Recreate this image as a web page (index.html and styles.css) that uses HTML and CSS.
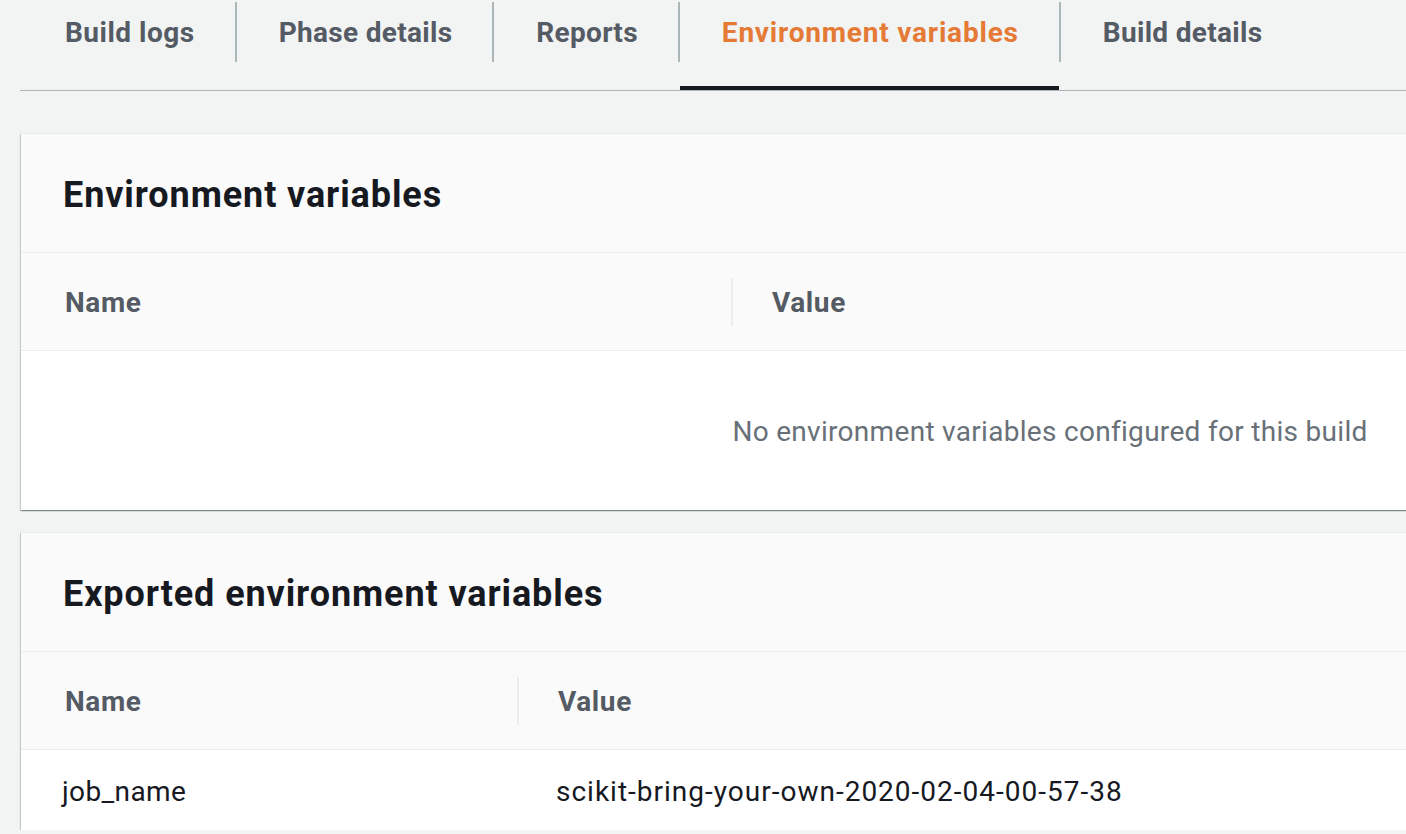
FILE: index.html
```html
<!DOCTYPE html>
<html lang="en">
<head>
<meta charset="utf-8">
<title>Environment variables</title>
<link rel="stylesheet" href="styles.css">
</head>
<body>
<div class="page">
  <nav class="tabs">
    <div class="tab tab-first"><span class="tab-label">Build logs</span></div>
    <div class="tab-sep"></div>
    <div class="tab"><span class="tab-label">Phase details</span></div>
    <div class="tab-sep"></div>
    <div class="tab"><span class="tab-label">Reports</span></div>
    <div class="tab-sep"></div>
    <div class="tab tab-active"><span class="tab-label">Environment variables</span></div>
    <div class="tab-sep"></div>
    <div class="tab"><span class="tab-label">Build details</span></div>
  </nav>

  <section class="card card-env">
    <header class="card-header"><h2 class="card-title">Environment variables</h2></header>
    <div class="thead">
      <div class="th th-name-wide">Name</div>
      <div class="th th-value"><span class="th-sep"></span><span>Value</span></div>
    </div>
    <div class="empty">No environment variables configured for this build</div>
  </section>

  <section class="card card-exported">
    <header class="card-header"><h2 class="card-title">Exported environment variables</h2></header>
    <div class="thead">
      <div class="th th-name-narrow">Name</div>
      <div class="th th-value"><span class="th-sep"></span><span>Value</span></div>
    </div>
    <div class="row">
      <div class="td td-name-narrow">job_name</div>
      <div class="td td-value">scikit-bring-your-own-2020-02-04-00-57-38</div>
    </div>
  </section>
</div>
</body>
</html>
```

FILE: styles.css
```css
html, body {
  margin: 0;
  padding: 0;
}
body {
  background: #f2f3f3;
  overflow: hidden;
  font-family: Roboto, "Liberation Sans", sans-serif;
  color: #16191f;
}
.page {
  width: 2100px;
  padding-left: 20px;
}

/* Tabs */
.tabs {
  display: flex;
  align-items: flex-start;
  height: 90px;
  border-bottom: 1px solid #aab7b8;
}
.tab {
  box-sizing: border-box;
  height: 90px;
  padding: 3px 40px 0 42px;
}
.tab-first {
  padding-left: 45px;
}
.tab-label {
  display: block;
  line-height: 60px;
  font-size: 28px;
  font-weight: 700;
  letter-spacing: 0.3px;
  color: #545b64;
  white-space: nowrap;
}
.tab-first .tab-label {
  letter-spacing: 0.5px;
}
.tab-active {
  border-bottom: 4px solid #16191f;
}
.tab-active .tab-label {
  color: #e47a35;
  letter-spacing: 0.8px;
}
.tab-sep {
  width: 2px;
  height: 60px;
  margin-top: 2px;
  background: #aab7b8;
}

/* Cards */
.card {
  width: 2058px;
  margin-left: 1px;
  background: #ffffff;
  border-top: 1px solid #eaeded;
  box-shadow: 0 1px 1px 0 rgba(0, 28, 36, 0.3), 1px 1px 1px 0 rgba(0, 28, 36, 0.15), -1px 1px 1px 0 rgba(0, 28, 36, 0.15);
}
.card-env {
  margin-top: 42px;
}
.card-exported {
  margin-top: 22px;
}
.card-header {
  box-sizing: border-box;
  height: 119px;
  display: flex;
  align-items: center;
  padding: 3px 0 0 42px;
  background: #fafafa;
  border-bottom: 1px solid #eaeded;
}
.card-title {
  margin: 0;
  font-size: 36px;
  font-weight: 700;
  letter-spacing: 0.9px;
  color: #16191f;
}

/* Table */
.thead {
  box-sizing: border-box;
  height: 98px;
  display: flex;
  align-items: center;
  padding-top: 2px;
  background: #fafafa;
  border-bottom: 1px solid #eaeded;
}
.th {
  font-size: 28px;
  font-weight: 700;
  letter-spacing: 0.6px;
  color: #545b64;
  box-sizing: border-box;
}
.th-name-wide {
  width: 710px;
  padding-left: 44px;
}
.th-name-narrow {
  width: 496px;
  padding-left: 44px;
}
.th-value {
  display: flex;
  align-items: center;
  gap: 39px;
}
.th-sep {
  display: block;
  width: 2px;
  height: 48px;
  margin-top: -2px;
  background: #eaeded;
}

.empty {
  height: 159px;
  display: flex;
  align-items: center;
  justify-content: center;
  padding-top: 2px;
  box-sizing: border-box;
  font-size: 28px;
  letter-spacing: 0.3px;
  color: #687078;
}

.row {
  height: 80px;
  display: flex;
  align-items: center;
  padding-top: 2px;
  box-sizing: border-box;
}
.td {
  font-size: 28px;
  color: #16191f;
  box-sizing: border-box;
  white-space: nowrap;
}
.td-name-narrow {
  width: 496px;
  padding-left: 41px;
  letter-spacing: 0.4px;
}
.td-value {
  padding-left: 39px;
  letter-spacing: 1px;
}
```
